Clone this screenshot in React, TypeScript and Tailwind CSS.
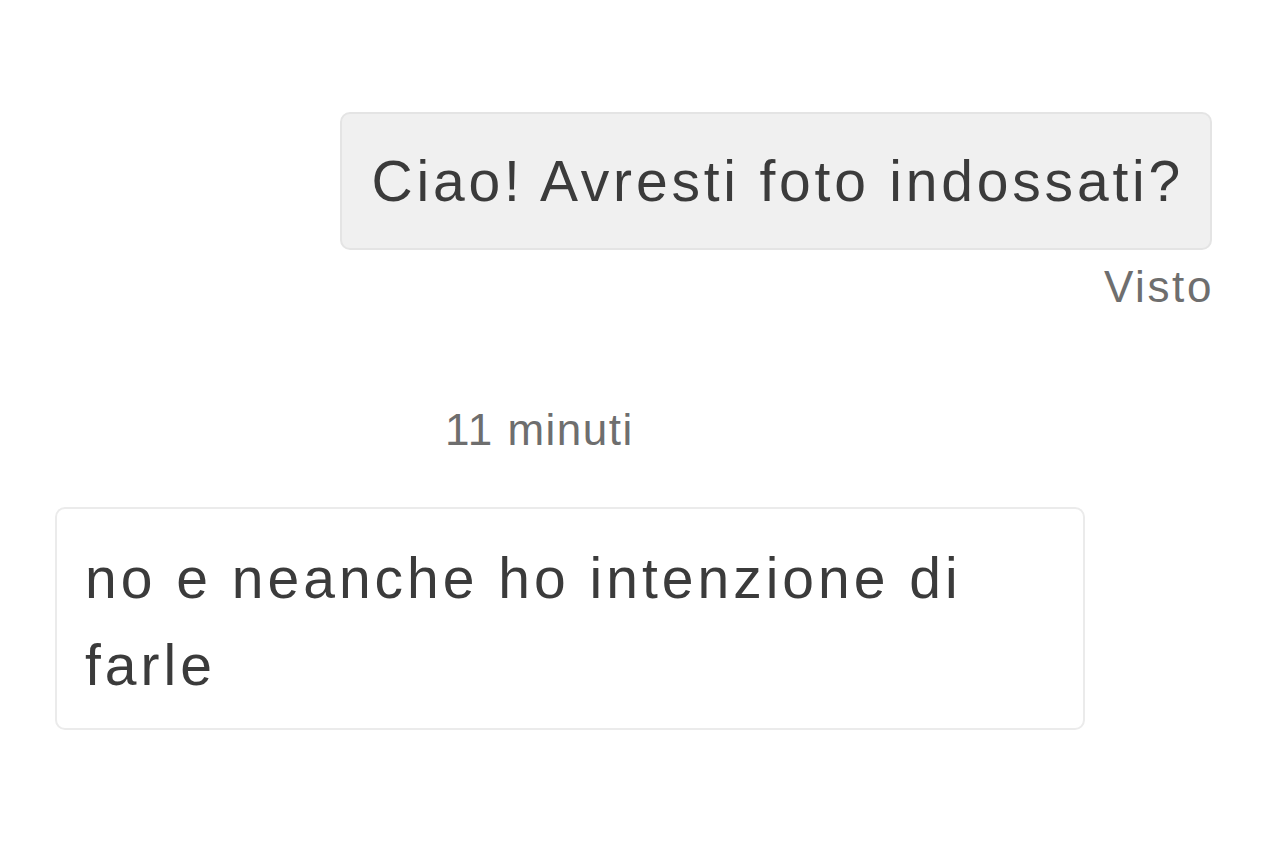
export default function App() {
  return (
    <div
      className="w-[1280px] h-[853px] bg-white text-[#3b3b3b] overflow-hidden"
      style={{ fontFamily: '"Liberation Sans", Arial, sans-serif' }}
    >
      <div className="flex flex-col pt-[112px] pl-[55px] pr-[68px]">
        {/* outgoing */}
        <div className="flex flex-col items-end">
          <div className="h-[138px] flex items-center pl-[29px] pr-[26px] rounded-[10px] bg-[#f0f0f0] border-2 border-[#e4e4e4]">
            <span className="text-[57px] leading-none tracking-[3.8px]">Ciao! Avresti foto indossati?</span>
          </div>
          <span className="mt-[15px] text-[44px] leading-none tracking-[2.6px] text-[#6e6e6e] -mr-[2px]">Visto</span>
        </div>

        {/* timestamp */}
        <div className="mt-[99px] pl-[390px] text-[44px] leading-none tracking-[1.5px] text-[#6e6e6e]">11 minuti</div>

        {/* incoming */}
        <div className="mt-[55px] w-[1030px] rounded-[10px] border-2 border-[#ebebeb] bg-white pl-[28px] pr-[30px] pt-[26px] pb-[19px]">
          <p className="text-[57px] leading-[87px] tracking-[4px]">no e neanche ho intenzione di farle</p>
        </div>
      </div>
    </div>
  );
}
